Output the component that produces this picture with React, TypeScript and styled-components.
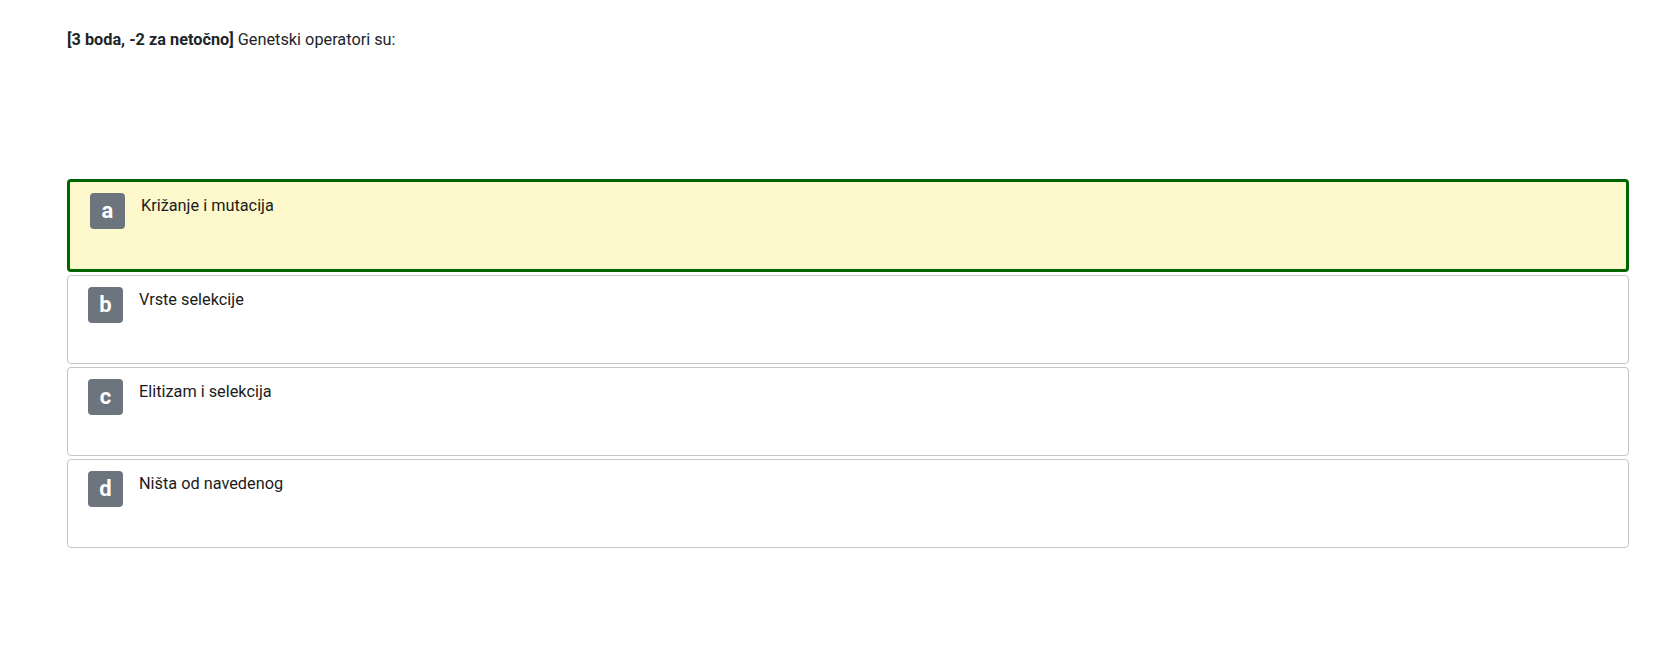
import styled, { createGlobalStyle } from 'styled-components';

interface Answer {
  letter: string;
  text: string;
}

const answers: Answer[] = [
  { letter: 'a', text: 'Križanje i mutacija' },
  { letter: 'b', text: 'Vrste selekcije' },
  { letter: 'c', text: 'Elitizam i selekcija' },
  { letter: 'd', text: 'Ništa od navedenog' },
];

const GlobalStyle = createGlobalStyle`
  body {
    margin: 0;
    background: #fff;
    font-family: Roboto, "Noto Sans", sans-serif;
    color: #212529;
  }
`;

const Page = styled.div`
  padding: 28px 39px 40px 67px;
`;

const Question = styled.div`
  font-size: 16.3px;
  line-height: 24px;
  min-height: 151px;
`;

const Points = styled.b`
  font-weight: 700;
`;

const AnswerList = styled.div`
  display: flex;
  flex-direction: column;
  gap: 3px;
`;

const AnswerCard = styled.div<{ $selected: boolean }>`
  display: flex;
  align-items: flex-start;
  gap: 16px;
  padding: 11px 20px 40px;
  border-radius: 4px;
  border: ${p => (p.$selected ? '3px solid #006400' : '1px solid #c6c6c6')};
  background-color: ${p => (p.$selected ? '#fdf9cd' : '#fff')};
`;

const Letter = styled.span`
  flex: none;
  width: 35px;
  height: 36px;
  border-radius: 4px;
  background-color: #6c757d;
  color: #fff;
  font-size: 22px;
  font-weight: 700;
  display: flex;
  align-items: center;
  justify-content: center;
  padding-bottom: 2px;
  box-sizing: border-box;
`;

const AnswerText = styled.span`
  font-size: 16.3px;
  line-height: 24px;
  color: #1b1b1b;
  margin-top: 1px;
`;

export default function App() {
  const selected = 'a';

  return (
    <>
      <GlobalStyle />
      <Page>
        <Question>
          <Points>[3 boda, -2 za netočno]</Points> Genetski operatori su:
        </Question>
        <AnswerList>
          {answers.map(a => (
            <AnswerCard key={a.letter} $selected={a.letter === selected}>
              <Letter>{a.letter}</Letter>
              <AnswerText>{a.text}</AnswerText>
            </AnswerCard>
          ))}
        </AnswerList>
      </Page>
    </>
  );
}
